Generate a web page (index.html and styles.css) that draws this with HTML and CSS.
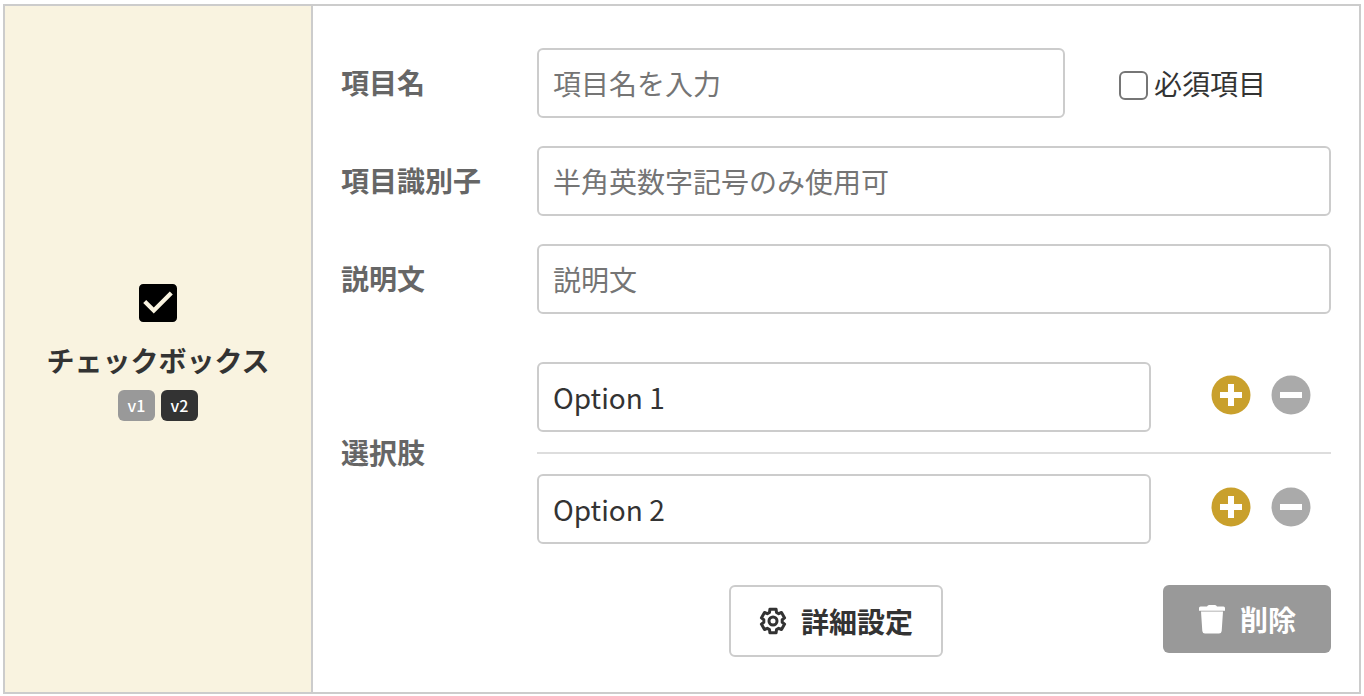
FILE: index.html
```html
<!DOCTYPE html>
<html lang="ja">
<head>
  <meta charset="UTF-8">
  <meta name="viewport" content="width=device-width, initial-scale=1.0">
  <title>フォーム項目</title>
  <link rel="stylesheet" href="styles.css">
</head>
<body>
  <div class="field-card">
    <div class="field-type">
      <svg class="type-icon" viewBox="3 3 18 18" aria-hidden="true">
        <path d="M19 3H5c-1.11 0-2 .9-2 2v14c0 1.1.89 2 2 2h14c1.11 0 2-.9 2-2V5c0-1.1-.89-2-2-2zm-9 14l-5-5 1.41-1.41L10 14.17l7.59-7.59L19 8l-9 9z"/>
      </svg>
      <div class="type-name">チェックボックス</div>
      <div class="versions">
        <span class="version">v1</span>
        <span class="version active">v2</span>
      </div>
    </div>

    <form class="field-body">
      <div class="row">
        <label class="row-label" for="name">項目名</label>
        <div class="row-content">
          <input class="text-input" type="text" id="name" placeholder="項目名を入力">
          <div class="required">
            <input type="checkbox" id="required">
            <label for="required">必須項目</label>
          </div>
        </div>
      </div>

      <div class="row">
        <label class="row-label" for="key">項目識別子</label>
        <div class="row-content">
          <input class="text-input" type="text" id="key" placeholder="半角英数字記号のみ使用可">
        </div>
      </div>

      <div class="row">
        <label class="row-label" for="description">説明文</label>
        <div class="row-content">
          <input class="text-input" type="text" id="description" placeholder="説明文">
        </div>
      </div>

      <div class="row">
        <div class="row-label" id="options-label">選択肢</div>
        <div class="options" role="group" aria-labelledby="options-label">
          <div class="option">
            <input class="text-input" type="text" value="Option 1" aria-label="選択肢 1">
            <div class="option-buttons">
              <button class="round-button add" type="button" aria-label="追加">
                <svg viewBox="0 0 40 40"><circle cx="20" cy="20" r="19.5"/><path d="M17 9h6v8h8v6h-8v8h-6v-8H9v-6h8z"/></svg>
              </button>
              <button class="round-button remove" type="button" aria-label="削除">
                <svg viewBox="0 0 40 40"><circle cx="20" cy="20" r="19.5"/><path d="M9 17h22v6H9z"/></svg>
              </button>
            </div>
          </div>
          <div class="option">
            <input class="text-input" type="text" value="Option 2" aria-label="選択肢 2">
            <div class="option-buttons">
              <button class="round-button add" type="button" aria-label="追加">
                <svg viewBox="0 0 40 40"><circle cx="20" cy="20" r="19.5"/><path d="M17 9h6v8h8v6h-8v8h-6v-8H9v-6h8z"/></svg>
              </button>
              <button class="round-button remove" type="button" aria-label="削除">
                <svg viewBox="0 0 40 40"><circle cx="20" cy="20" r="19.5"/><path d="M9 17h22v6H9z"/></svg>
              </button>
            </div>
          </div>
        </div>
      </div>

      <div class="actions">
        <button class="button settings" type="button">
          <svg class="gear" viewBox="0 0 28 28" aria-hidden="true">
            <path d="M10.5 5.4L10.9 2.3H17.1L17.5 5.4L19.7 6.7L22.5 5.5L25.6 10.9L23.2 12.7V15.3L25.6 17.1L22.5 22.5L19.7 21.3L17.5 22.6L17.1 25.7H10.9L10.5 22.6L8.3 21.3L5.5 22.5L2.4 17.1L4.8 15.3V12.7L2.4 10.9L5.5 5.5L8.3 6.7z"/>
            <circle cx="14" cy="14" r="4"/>
          </svg>
          詳細設定
        </button>
        <button class="button delete" type="button">
          <svg class="trash" viewBox="0 0 28 30" aria-hidden="true">
            <path d="M9 2.6Q9.6 1 11 1h6q1.400 0 2 1.600h6.500q1.500 0 1.500 1.500v2.600H1V4.100q0-1.500 1.500-1.500zM3 7.600h22l-1.300 19.400q-.3 2.600-2.700 2.600H7q-2.400 0-2.700-2.600z"/>
          </svg>
          削除
        </button>
      </div>
    </form>
  </div>
</body>
</html>
```
FILE: styles.css
```css
* {
  box-sizing: border-box;
}

body {
  margin: 0;
  padding: 4px 3px 2px;
  background-color: #fff;
  color: #333;
  font-family: "Noto Sans CJK JP", sans-serif;
  font-size: 28px;
  line-height: 40px;
}

input,
button {
  margin: 0;
  font: inherit;
  color: inherit;
}

.field-card {
  display: flex;
  border: 2px solid #ccc;
}

.field-type {
  display: flex;
  flex-direction: column;
  align-items: center;
  justify-content: center;
  flex: 0 0 308px;
  padding-top: 6px;
  border-right: 2px solid #ccc;
  background-color: #f9f3e0;
}

.type-icon {
  width: 38px;
  height: 38px;
  margin-bottom: 18px;
}

.type-name {
  font-weight: bold;
}

.versions {
  display: flex;
  gap: 6px;
  margin-top: 10px;
}

.version {
  width: 37px;
  border-radius: 6px;
  background-color: #999;
  color: #fff;
  font-size: 16px;
  font-weight: 500;
  line-height: 31px;
  text-align: center;
}

.version.active {
  background-color: #333;
}

.field-body {
  flex: 1;
  padding: 42px 28px 35px;
}

.row {
  display: flex;
  align-items: center;
  margin-bottom: 28px;
}

.row-label {
  flex: 0 0 196px;
  padding-bottom: 2px;
  color: #666;
  font-weight: bold;
}

.row-content {
  display: flex;
  flex: 1;
  align-items: center;
}

.text-input {
  flex: 1;
  min-width: 0;
  height: 70px;
  padding: 0 14px;
  border: 2px solid #ccc;
  border-radius: 6px;
  background-color: #fff;
}

.text-input::placeholder {
  color: #757575;
}

.required {
  display: flex;
  align-items: center;
  gap: 6px;
  width: 266px;
  padding-left: 54px;
}

.required input {
  appearance: none;
  width: 29px;
  height: 29px;
  margin-top: 4px;
  border: 2px solid #767676;
  border-radius: 6px;
  background-color: #fff;
}

.required input:checked {
  background-color: #c9a02c;
}

.options {
  flex: 1;
}

.option {
  display: flex;
  align-items: center;
  padding: 20px 0;
}

.option + .option {
  border-top: 2px solid #ddd;
}

.option-buttons {
  display: flex;
  justify-content: flex-end;
  gap: 20px;
  width: 180px;
  padding: 0 20px 4px;
}

.round-button {
  width: 40px;
  height: 40px;
  padding: 0;
  border: none;
  background: none;
  cursor: pointer;
}

.round-button svg {
  display: block;
  fill: #fff;
}

.add circle {
  fill: #c9a02c;
}

.remove circle {
  fill: #aaa;
}

.actions {
  display: grid;
  grid-template-columns: 1fr auto 1fr;
  align-items: start;
  margin-top: -7px;
}

.button {
  display: flex;
  align-items: center;
  justify-content: center;
  gap: 14px;
  height: 68px;
  border: none;
  border-radius: 6px;
  font-weight: bold;
  cursor: pointer;
}

.gear {
  width: 28px;
  height: 28px;
  fill: none;
  stroke: currentColor;
  stroke-width: 3;
  stroke-linejoin: round;
}

.trash {
  width: 28px;
  height: 30px;
  fill: currentColor;
}

.settings {
  grid-column: 2;
  width: 214px;
  height: 72px;
  border: 2px solid #ccc;
  background-color: #fff;
}

.delete {
  justify-self: end;
  width: 168px;
  background-color: #999;
  color: #fff;
}
```
